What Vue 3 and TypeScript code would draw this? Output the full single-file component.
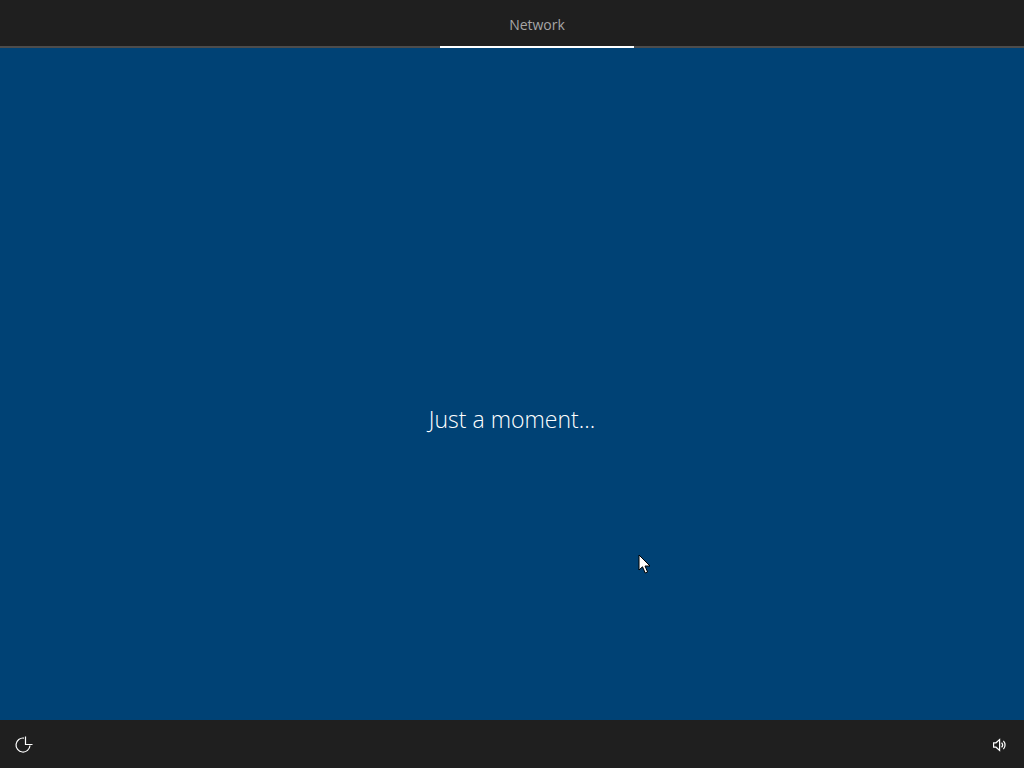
<template>
  <div class="setup-page">

    <!-- Top bar -->
    <header class="top-bar">
      <div class="tab">Network</div>
    </header>

    <!-- Main -->
    <main class="main">
      <p class="message">Just a moment...</p>
      <svg class="cursor" width="14" height="21" viewBox="0 0 14 21">
        <path d="M1 1 L1 16 L4.5 12.8 L7.2 19 L9.6 18 L7 12 L12 12 Z" fill="#fff" stroke="#000" stroke-width="1" />
      </svg>
    </main>

    <!-- Bottom bar -->
    <footer class="bottom-bar">
      <svg class="icon" width="18" height="18" viewBox="0 0 18 18" fill="none" stroke="#fff" stroke-width="1.2">
        <path d="M9 2.1 A7 7 0 1 0 15 9.5" />
        <path d="M10.5 0.5 V8.5 H17.5" />
      </svg>
      <svg class="icon" width="18" height="18" viewBox="0 0 18 18" fill="none" stroke="#fff" stroke-width="1.2">
        <path d="M3.6 6.8 H6 L9.6 3.6 V14.4 L6 11.2 H3.6 Z" />
        <path d="M11.6 6.6 A3.6 3.6 0 0 1 11.6 11.4" />
        <path d="M13.4 4.8 A6.2 6.2 0 0 1 13.4 13.2" />
      </svg>
    </footer>

  </div>
</template>

<script setup lang="ts">
</script>

<style>
html, body { margin: 0; background: #004275; }
</style>

<style scoped>
* { box-sizing: border-box; margin: 0; padding: 0; }

.setup-page {
  width: 1024px;
  height: 768px;
  display: flex;
  flex-direction: column;
  font-family: 'Open Sans', 'Noto Sans', sans-serif;
  overflow: hidden;
}

.top-bar {
  height: 48px;
  flex-shrink: 0;
  background: #1f1f1f;
  border-bottom: 2px solid #4c4c4c;
  display: flex;
  padding-left: 440px;
}

.tab {
  width: 194px;
  height: 48px;
  border-bottom: 2px solid #fff;
  color: #a6a6a6;
  font-size: 14px;
  line-height: 50px;
  text-align: center;
}

.main {
  flex: 1;
  position: relative;
  background: #004275;
  display: flex;
  align-items: center;
  justify-content: center;
}

.message {
  color: #fff;
  font-size: 23px;
  font-weight: 300;
  line-height: 30px;
  margin-top: 70px;
}

.cursor {
  position: absolute;
  left: 638px;
  top: 506px;
}

.bottom-bar {
  height: 48px;
  flex-shrink: 0;
  background: #1f1f1f;
  display: flex;
  align-items: center;
  justify-content: space-between;
  padding: 2px 16px 0 15px;
}
</style>
